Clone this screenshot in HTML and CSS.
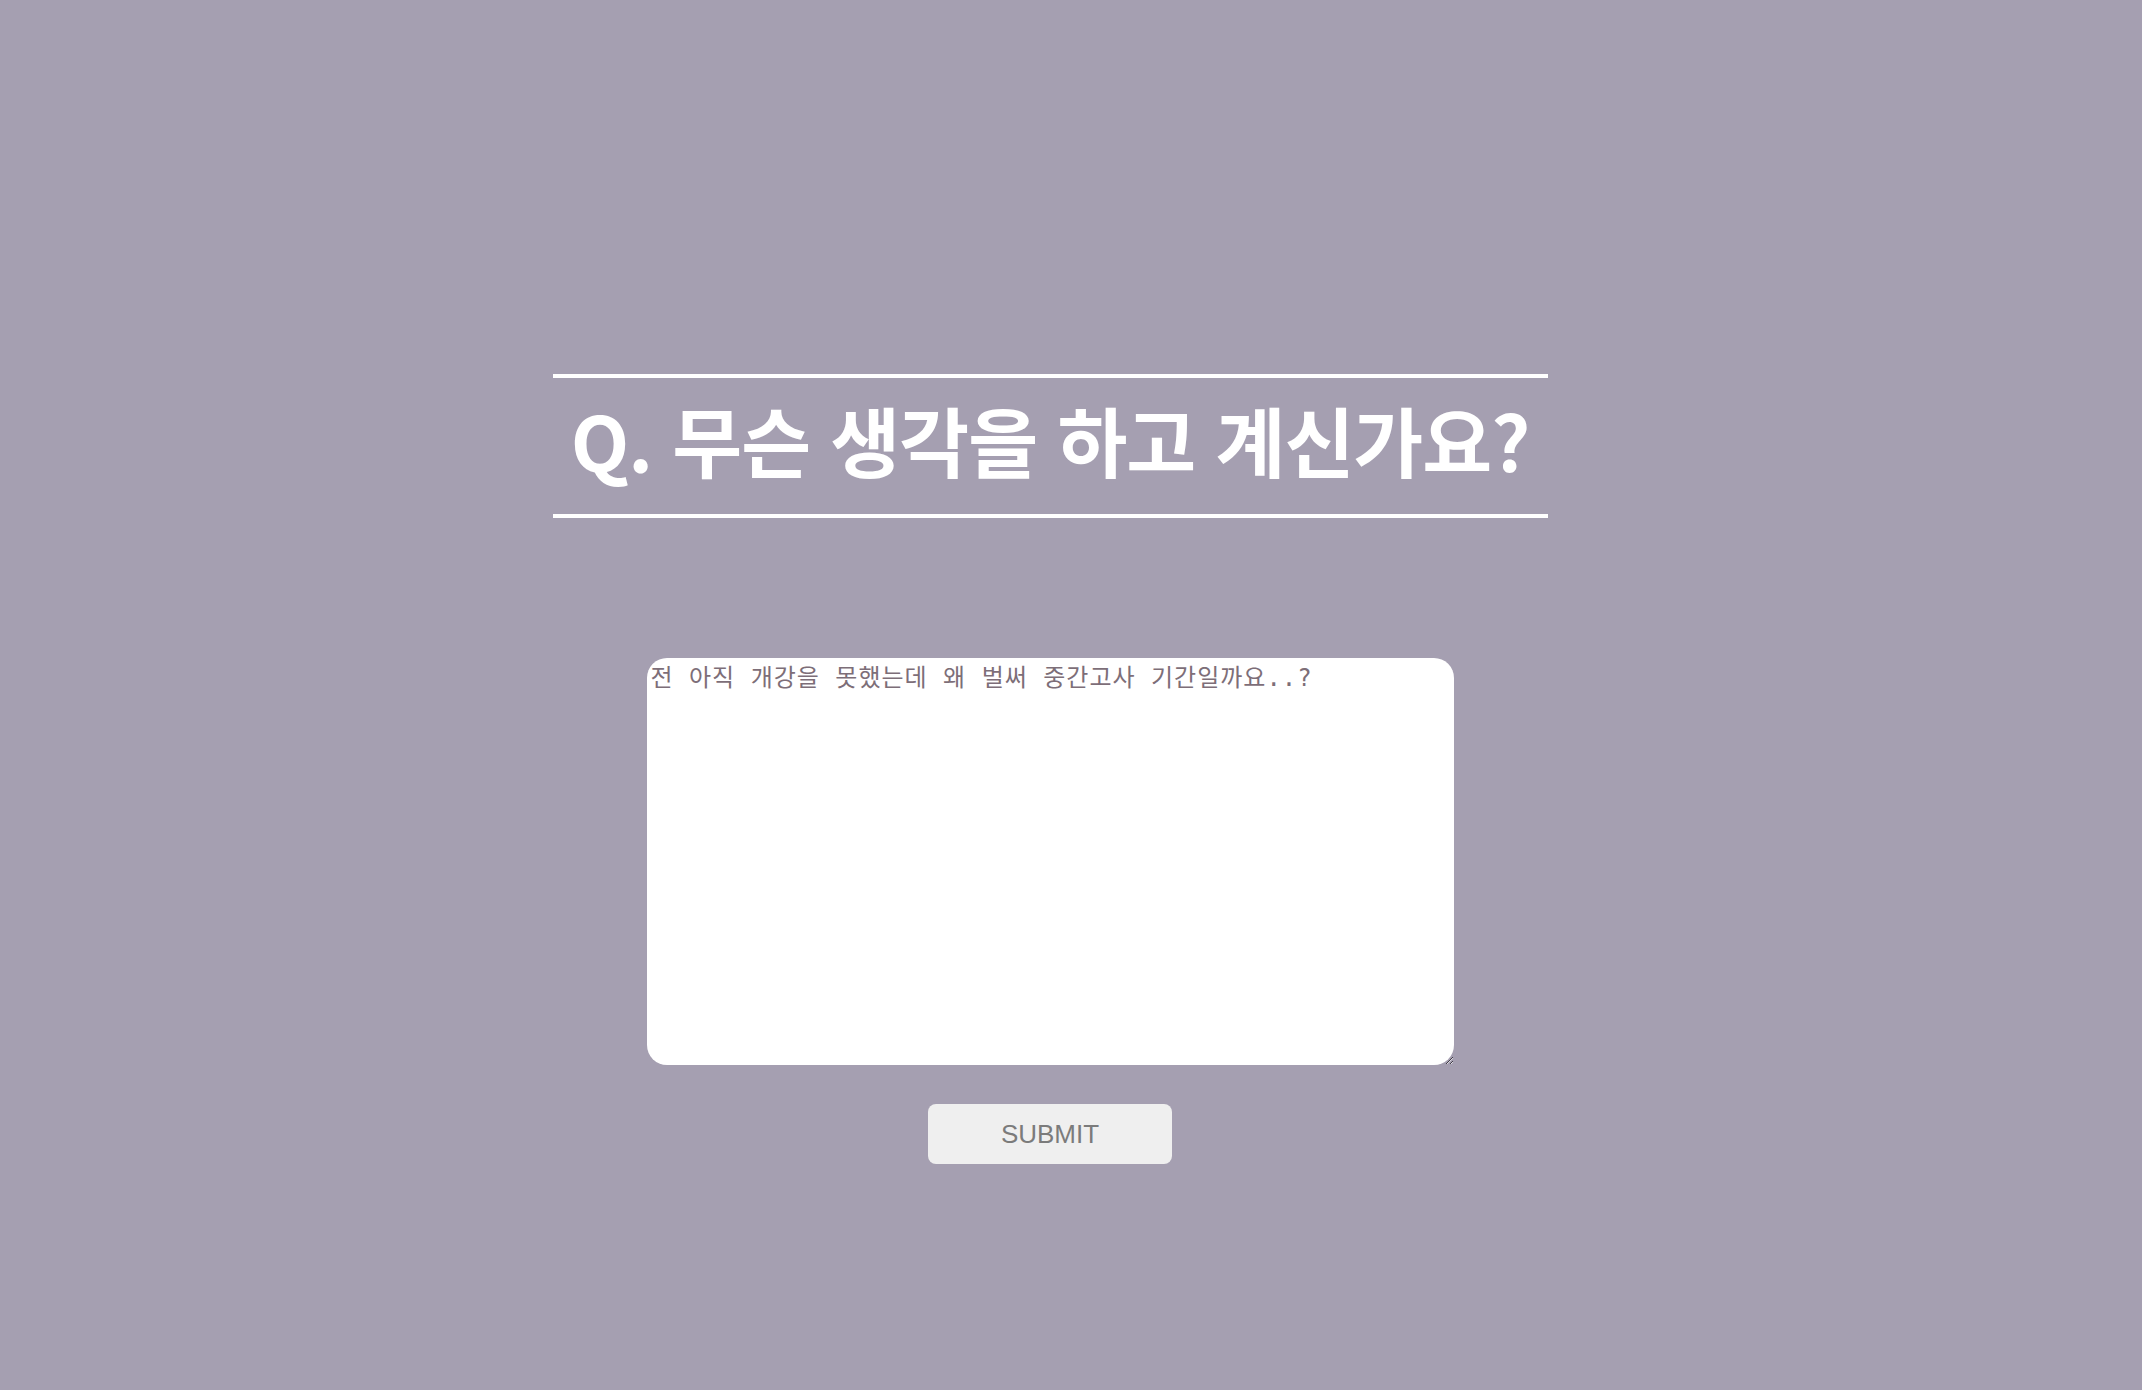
FILE: index.html
```html
<!DOCTYPE html>
<html lang="ko">
<head>
<meta charset="utf-8">
<title>Q</title>
<link rel="stylesheet" href="styles.css">
</head>
<body>
<main class="page">
  <h1 class="question">Q. 무슨 생각을 하고 계신가요?</h1>
  <form class="answer-form">
    <textarea class="answer" placeholder="전 아직 개강을 못했는데 왜 벌써 중간고사 기간일까요..?"></textarea>
    <button type="button" class="submit">SUBMIT</button>
  </form>
</main>
</body>
</html>
```
FILE: styles.css
```css
html, body {
  margin: 0;
  padding: 0;
}
body {
  background: #a59fb1;
  min-height: 1390px;
}
.page {
  display: flex;
  flex-direction: column;
  align-items: center;
  padding-top: 374px;
  padding-right: 42px;
}
.question {
  box-sizing: content-box;
  margin: 0;
  width: 995px;
  height: 122px;
  padding-bottom: 14px;
  border-top: 4px solid #ffffff;
  border-bottom: 4px solid #ffffff;
  color: #ffffff;
  font-family: "Noto Sans CJK KR", "Noto Sans", sans-serif;
  font-weight: 700;
  font-size: 76px;
  letter-spacing: -1px;
  line-height: 122px;
  text-align: center;
}
.answer-form {
  display: flex;
  flex-direction: column;
  align-items: center;
  margin-top: 140px;
  gap: 39px;
}
.answer {
  box-sizing: border-box;
  width: 807px;
  height: 407px;
  border: none;
  border-radius: 20px;
  background: #ffffff;
  padding: 0 4px;
  font-family: "DejaVu Sans Mono", "Noto Sans CJK KR", monospace;
  font-size: 24px;
  letter-spacing: 1px;
  color: #7d6e78;
  outline: none;
}
.answer::placeholder {
  color: #7d6e78;
  opacity: 1;
}
.submit {
  width: 244px;
  height: 60px;
  border: none;
  border-radius: 8px;
  background: #efefef;
  color: #7b7b7b;
  font-family: "Liberation Sans", Arial, sans-serif;
  font-size: 26px;
  padding: 0;
}
```
